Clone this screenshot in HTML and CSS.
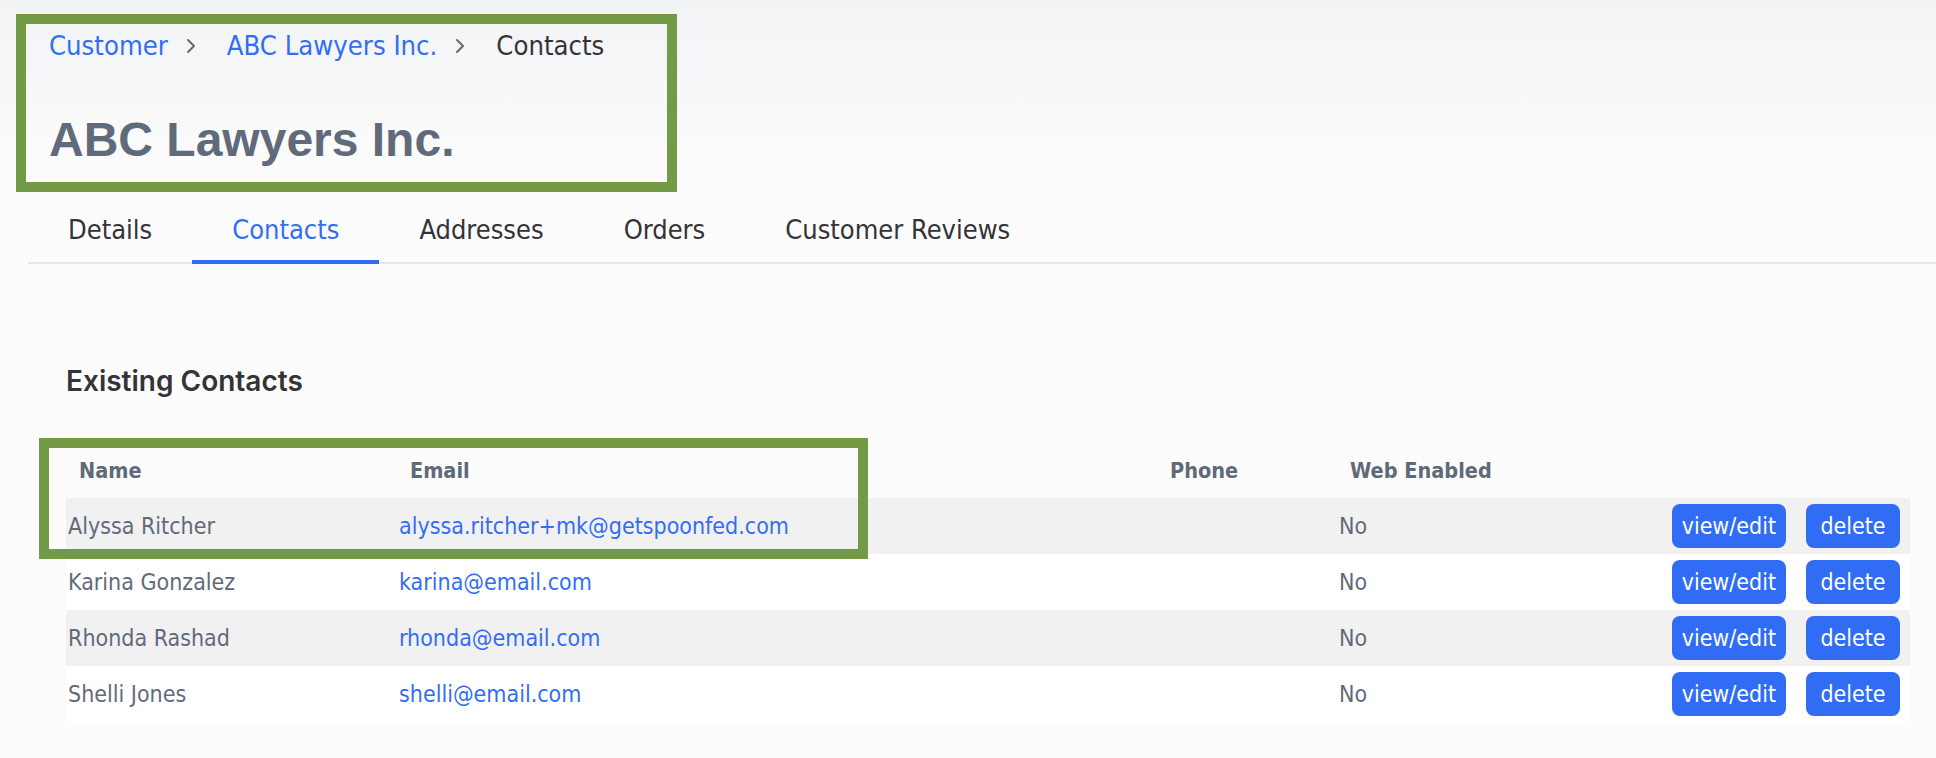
FILE: index.html
```html
<!DOCTYPE html>
<html lang="en">
<head>
<meta charset="utf-8">
<title>ABC Lawyers Inc. - Contacts</title>
<link rel="stylesheet" href="styles.css">
</head>
<body>
<div class="page">
  <header class="page-head">
    <nav class="crumbs">
      <a class="crumb-link" href="#">Customer</a>
      <svg class="chev" viewBox="0 0 10 16" aria-hidden="true"><path d="M2 2 L8 8 L2 14"/></svg>
      <a class="crumb-link" href="#">ABC Lawyers Inc.</a>
      <svg class="chev" viewBox="0 0 10 16" aria-hidden="true"><path d="M2 2 L8 8 L2 14"/></svg>
      <span class="crumb-current">Contacts</span>
    </nav>
    <h1 class="title">ABC Lawyers Inc.</h1>
  </header>

  <nav class="tabs">
    <a class="tab" href="#">Details</a>
    <a class="tab tab-active" href="#">Contacts</a>
    <a class="tab" href="#">Addresses</a>
    <a class="tab" href="#">Orders</a>
    <a class="tab" href="#">Customer Reviews</a>
  </nav>

  <section class="contacts">
    <h2 class="section-title">Existing Contacts</h2>
    <table class="contact-table">
      <colgroup>
        <col class="c-name">
        <col class="c-email">
        <col class="c-phone">
        <col class="c-web">
        <col>
      </colgroup>
      <thead>
        <tr>
          <th>Name</th>
          <th>Email</th>
          <th>Phone</th>
          <th>Web Enabled</th>
          <th></th>
        </tr>
      </thead>
      <tbody>
        <tr>
          <td>Alyssa Ritcher</td>
          <td><a class="mail" href="#">alyssa.ritcher+mk@getspoonfed.com</a></td>
          <td></td>
          <td>No</td>
          <td class="actions"><button class="btn">view/edit</button><button class="btn">delete</button></td>
        </tr>
        <tr>
          <td>Karina Gonzalez</td>
          <td><a class="mail" href="#">karina@email.com</a></td>
          <td></td>
          <td>No</td>
          <td class="actions"><button class="btn">view/edit</button><button class="btn">delete</button></td>
        </tr>
        <tr>
          <td>Rhonda Rashad</td>
          <td><a class="mail" href="#">rhonda@email.com</a></td>
          <td></td>
          <td>No</td>
          <td class="actions"><button class="btn">view/edit</button><button class="btn">delete</button></td>
        </tr>
        <tr>
          <td>Shelli Jones</td>
          <td><a class="mail" href="#">shelli@email.com</a></td>
          <td></td>
          <td>No</td>
          <td class="actions"><button class="btn">view/edit</button><button class="btn">delete</button></td>
        </tr>
      </tbody>
    </table>
  </section>

  <div class="annot annot-head"></div>
  <div class="annot annot-row"></div>
</div>
</body>
</html>
```

FILE: styles.css
```css
html, body {
  margin: 0;
  padding: 0;
}

body {
  background: #fcfcfc;
  font-family: "DejaVu Sans Condensed", "DejaVu Sans", sans-serif;
  font-stretch: condensed;
  color: #333338;
}

.page {
  position: relative;
  min-height: 758px;
  background: linear-gradient(#f2f3f5 0, #fcfcfc 170px);
}

/* header */
.page-head {
  padding: 30px 0 0 49px;
}

.crumbs {
  display: flex;
  align-items: center;
  height: 32px;
  font-size: 27.2px;
  line-height: 32px;
}

.crumb-link {
  color: #326ef5;
  text-decoration: none;
}

.crumb-current {
  color: #333338;
}

.chev {
  width: 10px;
  height: 16px;
  margin: 0 31px 0 18px;
}

.chev path {
  fill: none;
  stroke: #6a6a6a;
  stroke-width: 2;
  stroke-linecap: round;
  stroke-linejoin: round;
}

.title {
  margin: 50px 0 0;
  font-family: "Liberation Sans", Arial, sans-serif;
  font-stretch: normal;
  font-weight: bold;
  font-size: 48px;
  line-height: 56px;
  color: #5f6b7a;
}

/* tabs */
.tabs {
  display: flex;
  margin: 34px 0 0 28px;
  border-bottom: 2px solid #e6e6e6;
}

.tab {
  padding: 13px 40px 15px;
  font-size: 27px;
  line-height: 30px;
  color: #333338;
  text-decoration: none;
  border-bottom: 4px solid transparent;
  margin-bottom: -2px;
}

.tab-active {
  color: #326ef5;
  border-bottom-color: #316cf4;
}

/* contacts */
.contacts {
  padding: 0 26px 0 66px;
}

.section-title {
  margin: 101px 0 45px;
  font-family: Inter, "Noto Sans", sans-serif;
  font-stretch: normal;
  font-weight: 600;
  font-size: 28px;
  line-height: 32px;
  color: #333338;
}

.contact-table {
  width: 100%;
  border-collapse: collapse;
  table-layout: fixed;
}

.c-name { width: 331px; }
.c-email { width: 760px; }
.c-phone { width: 180px; }
.c-web { width: 200px; }

.contact-table th {
  height: 56px;
  padding: 0 0 0 13px;
  text-align: left;
  vertical-align: middle;
  font-weight: bold;
  font-size: 21.5px;
  color: #5e6a78;
}

.contact-table td {
  height: 56px;
  padding: 0 2px;
  vertical-align: middle;
  font-size: 23px;
  color: #616a7a;
  white-space: nowrap;
}

.contact-table tbody tr {
  background: #ffffff;
}

.contact-table tbody tr:nth-child(odd) {
  background: #f1f1f1;
}

.mail {
  color: #326ef5;
  text-decoration: none;
}

.contact-table td.actions {
  text-align: right;
  padding-right: 10px;
}

.btn {
  display: inline-block;
  box-sizing: border-box;
  height: 44px;
  min-width: 94px;
  margin-left: 20px;
  padding: 0 10px;
  border: none;
  border-radius: 8px;
  background: #316cf4;
  color: #ffffff;
  font: inherit;
  font-size: 23px;
  line-height: 44px;
  text-align: center;
  vertical-align: middle;
}

/* annotation frames drawn over the screenshot */
.annot {
  position: absolute;
  box-sizing: border-box;
  border: 10px solid #739b45;
  pointer-events: none;
}

.annot-head {
  left: 16px;
  top: 14px;
  width: 661px;
  height: 178px;
}

.annot-row {
  left: 39px;
  top: 438px;
  width: 829px;
  height: 121px;
}
```
